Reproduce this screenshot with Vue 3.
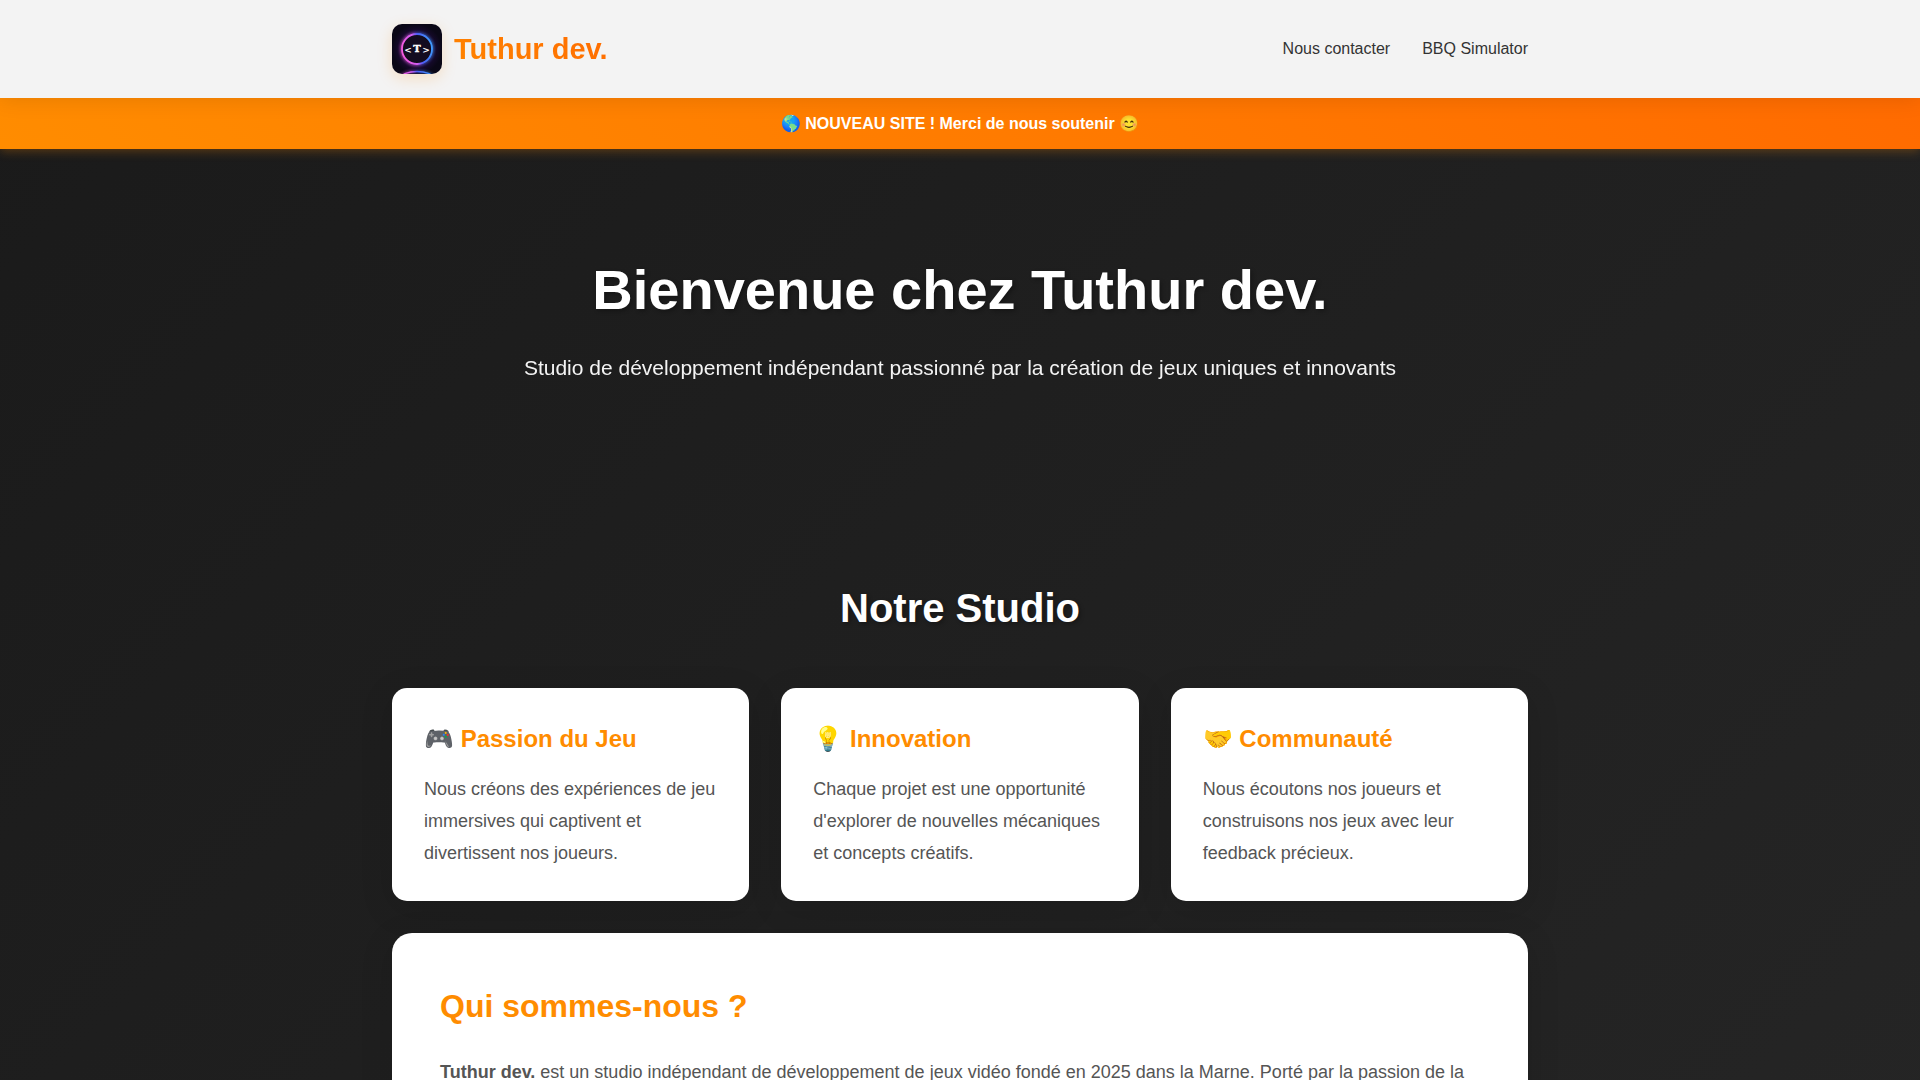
<script setup>
const links = [
  { label: 'Nous contacter', href: '#contact' },
  { label: 'BBQ Simulator', href: '#bbq-simulator' },
]

const features = [
  {
    title: '🎮 Passion du Jeu',
    text: 'Nous créons des expériences de jeu immersives qui captivent et divertissent nos joueurs.',
  },
  {
    title: '💡 Innovation',
    text: "Chaque projet est une opportunité d'explorer de nouvelles mécaniques et concepts créatifs.",
  },
  {
    title: '🤝 Communauté',
    text: 'Nous écoutons nos joueurs et construisons nos jeux avec leur feedback précieux.',
  },
]
</script>

<template>
  <div class="page">
    <header class="header">
      <nav class="container nav">
        <a class="logo" href="#">
          <svg class="logo-image" viewBox="0 0 50 50" aria-hidden="true">
            <defs>
              <linearGradient id="ring" x1="0" y1="0.6" x2="1" y2="0.4">
                <stop offset="0" stop-color="#f65be0" />
                <stop offset="0.42" stop-color="#d25cf0" />
                <stop offset="0.6" stop-color="#4a5cf5" />
                <stop offset="1" stop-color="#3f9cff" />
              </linearGradient>
              <radialGradient id="glow">
                <stop offset="0" stop-color="#1a0f2c" />
                <stop offset="0.6" stop-color="#1d0b36" />
                <stop offset="1" stop-color="#0a0716" />
              </radialGradient>
              <filter id="soft" x="-30%" y="-30%" width="160%" height="160%">
                <feGaussianBlur stdDeviation="1.6" />
              </filter>
            </defs>
            <rect width="50" height="50" fill="url(#glow)" />
            <circle cx="25" cy="25" r="15" fill="none" stroke="url(#ring)" stroke-width="4" opacity="0.6" filter="url(#soft)" />
            <circle cx="25" cy="25" r="15" fill="#130c20" stroke="url(#ring)" stroke-width="1.8" />
            <ellipse cx="25" cy="54" rx="16" ry="6.5" fill="none" stroke="url(#ring)" stroke-width="3" opacity="0.5" filter="url(#soft)" />
            <ellipse cx="25" cy="54" rx="16" ry="6.5" fill="none" stroke="url(#ring)" stroke-width="1.3" />
            <text class="logo-bracket" x="16" y="29">&lt;</text>
            <text class="logo-letter" x="25" y="28">T</text>
            <text class="logo-bracket" x="34" y="29">&gt;</text>
          </svg>
          <span class="logo-name">Tuthur dev.</span>
        </a>
        <ul class="nav-links">
          <li v-for="link in links" :key="link.href">
            <a :href="link.href">{{ link.label }}</a>
          </li>
        </ul>
      </nav>
    </header>

    <div class="banner">🌎 NOUVEAU SITE ! Merci de nous soutenir 😊</div>

    <main>
      <section class="hero">
        <h1>Bienvenue chez Tuthur dev.</h1>
        <p>Studio de développement indépendant passionné par la création de jeux uniques et innovants</p>
      </section>

      <section class="container studio">
        <h2 class="section-title">Notre Studio</h2>
        <div class="features">
          <article v-for="feature in features" :key="feature.title" class="card">
            <h3>{{ feature.title }}</h3>
            <p>{{ feature.text }}</p>
          </article>
        </div>
        <article class="about">
          <h2>Qui sommes-nous ?</h2>
          <p>
            <strong>Tuthur dev.</strong> est un studio indépendant de développement de jeux vidéo fondé en 2025
            dans la Marne. Porté par la passion de la
          </p>
        </article>
      </section>
    </main>
  </div>
</template>

<style>
body {
  margin: 0;
  background: #1e1e1e;
}
</style>

<style scoped>
.page {
  min-height: 100vh;
  font-family: "Liberation Sans", Arial, sans-serif;
  font-size: 16px;
  line-height: 26px;
  color: #333;
  background: linear-gradient(135deg, #1a1a1a, #252525);
}

.page *,
.page {
  box-sizing: border-box;
}

h1,
h2,
h3,
p,
ul {
  margin: 0;
  padding: 0;
}

.container {
  max-width: 1200px;
  margin: 0 auto;
  padding: 0 32px;
}

.header {
  position: relative;
  z-index: 2;
  padding: 24px 0;
  background: #f3f3f3;
  box-shadow: 0 2px 20px rgba(0, 0, 0, 0.1);
}

.nav {
  display: flex;
  align-items: center;
  justify-content: space-between;
}

.logo {
  display: flex;
  align-items: center;
  gap: 12px;
  color: transparent;
  text-decoration: none;
  background: linear-gradient(45deg, #ff8c00, #ff6b00);
  background-clip: text;
}

.logo-image {
  width: 50px;
  height: 50px;
  border-radius: 10px;
  box-shadow: 0 4px 15px rgba(255, 140, 0, 0.2);
}

.logo-letter,
.logo-bracket {
  fill: #fff;
  font-weight: bold;
  text-anchor: middle;
}

.logo-letter {
  font-family: "DejaVu Serif", serif;
  font-size: 10px;
  stroke: #fff;
  stroke-width: 0.4px;
}

.logo-bracket {
  font-family: "DejaVu Sans", sans-serif;
  font-size: 9px;
}

.logo-name {
  font-size: 29px;
  font-weight: bold;
  line-height: 46px;
}

.nav-links {
  display: flex;
  gap: 32px;
  list-style: none;
}

.nav-links a {
  color: #333;
  text-decoration: none;
}

.banner {
  position: relative;
  z-index: 1;
  padding: 13px 32px 12px;
  font-weight: bold;
  text-align: center;
  color: #fff;
  background: linear-gradient(45deg, #ff8c00, #ff6b00);
  box-shadow: 0 2px 10px rgba(255, 140, 0, 0.3);
}

.hero {
  padding: 96px 32px;
  text-align: center;
  color: #fff;
}

.hero h1 {
  margin-bottom: 16px;
  font-size: 56px;
  line-height: 90px;
  text-shadow: 2px 2px 4px rgba(0, 0, 0, 0.3);
}

.hero p {
  font-size: 21px;
  line-height: 34px;
  opacity: 0.95;
}

.studio {
  padding-top: 95px;
  padding-bottom: 64px;
}

.section-title {
  margin-bottom: 48px;
  font-size: 40px;
  line-height: 64px;
  text-align: center;
  color: #fff;
  text-shadow: 2px 2px 4px rgba(0, 0, 0, 0.3);
}

.features {
  display: grid;
  grid-template-columns: repeat(3, 1fr);
  gap: 32px;
  margin-bottom: 32px;
}

.card {
  padding: 32px;
  background: #fff;
  border-radius: 15px;
  box-shadow: 0 8px 32px rgba(0, 0, 0, 0.15);
}

.card h3 {
  margin-bottom: 15px;
  font-size: 24px;
  line-height: 38px;
  color: #ff8c00;
}

.card p,
.about p {
  font-size: 18px;
  line-height: 32px;
  color: #555;
}

.about {
  padding: 48px;
  background: #fff;
  border-radius: 20px;
  box-shadow: 0 8px 32px rgba(0, 0, 0, 0.15);
}

.about h2 {
  margin-bottom: 24px;
  font-size: 32px;
  line-height: 51px;
  color: #ff8c00;
}

@media (max-width: 900px) {
  .features {
    grid-template-columns: 1fr;
  }
}
</style>
